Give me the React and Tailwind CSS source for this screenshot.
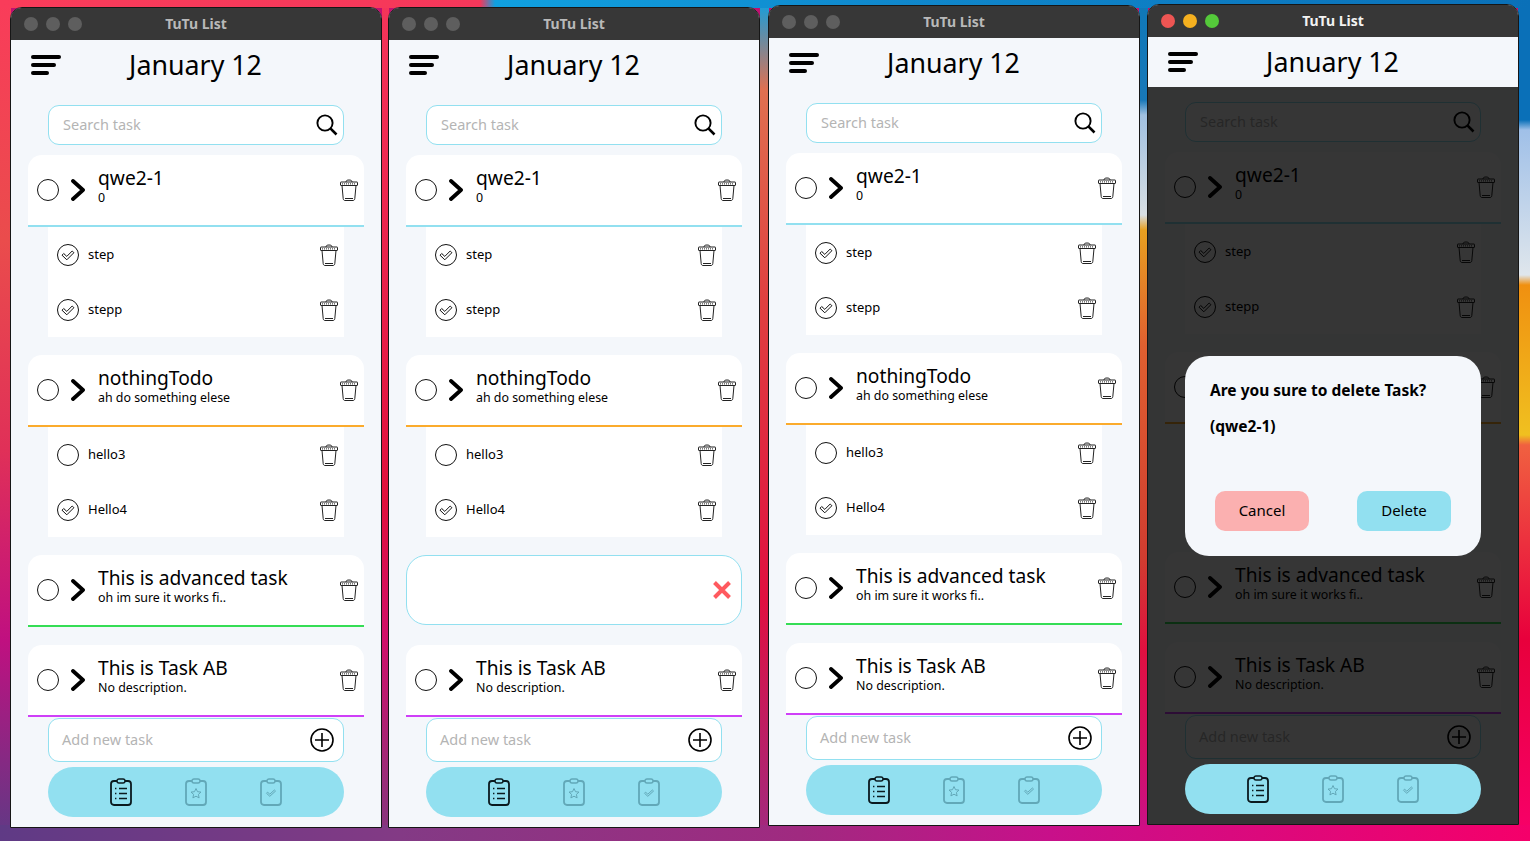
import React from "react";

const TASKS = [
  { title: "qwe2-1", sub: "0", line: "bg-[#92e0f0]", steps: [["step", true], ["stepp", true]] },
  { title: "nothingTodo", sub: "ah do something elese", line: "bg-[#fbab2c]", steps: [["hello3", false], ["Hello4", true]] },
  { title: "This is advanced task", sub: "oh im sure it works fi..", line: "bg-[#35dd55]", steps: [] },
  { title: "This is Task AB", sub: "No description.", line: "bg-[#cf3ff8]", steps: [] },
];

const Hamburger = () => (
  <svg width="30" height="22" viewBox="0 0 30 22" fill="none" stroke="#000" strokeWidth="4" strokeLinecap="round">
    <path d="M2 3H28" />
    <path d="M2 11H23" />
    <path d="M2 19H16" />
  </svg>
);

const SearchIcon = () => (
  <svg width="22" height="22" viewBox="0 0 22 22" fill="none" stroke="#000">
    <circle cx="9" cy="9" r="7.6" strokeWidth="1.9" />
    <path d="M14.6 14.6L20.5 20.5" strokeWidth="2.6" />
  </svg>
);

const Chevron = () => (
  <svg width="14" height="22" viewBox="0 0 14 22" fill="none" stroke="#000" strokeWidth="3.8" strokeLinecap="round" strokeLinejoin="round">
    <path d="M2 2L12 11L2 20" />
  </svg>
);

const Trash = () => (
  <svg width="18" height="22" viewBox="0 0 18 22" fill="none" stroke="#222" strokeWidth="1">
    <path d="M6 3C6 1.5 7 1 9 1S12 1.5 12 3" />
    <rect x="0.5" y="3" width="17" height="3.5" rx="0.5" />
    <path d="M2 4.9H16" strokeDasharray="1 1" />
    <path d="M2 6.5L3.2 19.6C3.3 20.8 4 21.5 5 21.5H13C14 21.5 14.7 20.8 14.8 19.6L16 6.5" />
    <path d="M5 19.5H13" />
  </svg>
);

const EmptyCircle = () => (
  <svg width="22" height="22" viewBox="0 0 22 22" fill="none" stroke="#111" strokeWidth="1">
    <circle cx="11" cy="11" r="10.5" />
  </svg>
);

const CheckCircle = () => (
  <svg width="22" height="22" viewBox="0 0 22 22" fill="none" stroke="#111" strokeWidth="1">
    <circle cx="11" cy="11" r="10.5" />
    <path d="M5 11.2L6.7 9.5L9.8 12.4L15.2 7L16.9 8.7L9.8 15.8Z" strokeLinejoin="round" />
  </svg>
);

const PlusCircle = () => (
  <svg width="24" height="24" viewBox="0 0 24 24" fill="none" stroke="#000" strokeWidth="1.6">
    <circle cx="12" cy="12" r="11" />
    <path d="M12 5V19M5 12H19" />
  </svg>
);

const Clipboard = ({ color, kind }) => (
  <svg width="22" height="28" viewBox="0 0 22 28" fill="none" stroke={color} strokeWidth="1.8">
    <rect x="1" y="3" width="20" height="24" rx="3" />
    <rect x="7" y="1" width="8" height="4" rx="2" fill="#92e0f0" strokeWidth="1.4" />
    {kind === "list" && (
      <>
        <path d="M9 10.5H17M9 15.5H17M9 20.5H17" strokeWidth="1.6" />
        <path d="M5 10.5H6.4M5 15.5H6.4M5 20.5H6.4" strokeWidth="1.4" />
      </>
    )}
    {kind === "star" && (
      <path d="M11 10.5L12.5 13.7L16 14.1L13.4 16.4L14.1 19.9L11 18.2L7.9 19.9L8.6 16.4L6 14.1L9.5 13.7Z" strokeWidth="1" strokeLinejoin="round" />
    )}
    {kind === "check" && (
      <path d="M6.5 15.3L7.6 14.2L9.8 16.2L14.4 12L15.5 13.1L9.8 18.3Z" strokeWidth="1" strokeLinejoin="round" />
    )}
  </svg>
);

const CloseX = () => (
  <svg width="18" height="18" viewBox="0 0 18 18" fill="none" stroke="#ff5a5f" strokeWidth="4">
    <path d="M1.5 1.5L16.5 16.5M16.5 1.5L1.5 16.5" />
  </svg>
);

function TitleBar({ active }) {
  return (
    <div className="relative flex h-[32px] shrink-0 items-center gap-[8px] rounded-t-[10px] bg-[#373737] pl-[13px]">
      <span className={`h-[14px] w-[14px] rounded-full ${active ? "bg-[#ed5553]" : "bg-[#5e5e5e]"}`} />
      <span className={`h-[14px] w-[14px] rounded-full ${active ? "bg-[#f5b01f]" : "bg-[#5e5e5e]"}`} />
      <span className={`h-[14px] w-[14px] rounded-full ${active ? "bg-[#54c93a]" : "bg-[#5e5e5e]"}`} />
      <span className={`absolute inset-x-0 -mt-[1px] text-center text-[14px] font-bold ${active ? "text-[#f2f2f2]" : "text-[#b9b9b9]"}`}>TuTu List</span>
    </div>
  );
}

function TaskCard({ task }) {
  return (
    <div>
      <div className="flex h-[70px] items-center rounded-t-[14px] bg-white pl-[9px] pr-[6px]">
        <EmptyCircle />
        <span className="ml-[12px] flex"><Chevron /></span>
        <div className="ml-[13px] flex-1 pb-[9px]">
          <div className="text-[19.2px] leading-[22px] text-black">{task.title}</div>
          <div className="mt-[1px] text-[12.4px] leading-[15px] text-black">{task.sub}</div>
        </div>
        <Trash />
      </div>
      <div className={`h-[2px] ${task.line}`} />
      {task.steps.length > 0 && (
        <div className="mx-[20px] bg-white">
          {task.steps.map(([label, done]) => (
            <div key={label} className="flex h-[55px] items-center pl-[9px] pr-[6px]">
              {done ? <CheckCircle /> : <EmptyCircle />}
              <span className="ml-[9px] flex-1 text-[13px] text-black">{label}</span>
              <Trash />
            </div>
          ))}
        </div>
      )}
    </div>
  );
}

function OpenInput() {
  return (
    <div className="mb-[2px] flex h-[70px] items-center justify-end rounded-[20px] border border-[#92e0f0] bg-white pr-[10px]">
      <CloseX />
    </div>
  );
}

function Window({ className, editing, dialog }) {
  return (
    <div className={`relative flex h-[821px] w-[372px] shrink-0 flex-col rounded-t-[12px] border border-[#161616] bg-[#f4f7fb] ${className}`}>
      <TitleBar active={dialog} />
      <div className="relative z-20 grid h-[50px] shrink-0 grid-cols-[1fr_auto_1fr] items-center bg-[#f4f7fb] pl-[20px] pr-[21px]">
        <Hamburger />
        <div className="text-[26.8px] text-black">January 12</div>
        <div />
      </div>
      <div className="mx-[37px] mt-[15px] flex h-[40px] items-center justify-between rounded-[11px] border border-[#92e0f0] bg-white pl-[14px] pr-[5px]">
        <span className="text-[14.5px] text-[#b4b4b4]">Search task</span>
        <SearchIcon />
      </div>
      <div className="mx-[17px] mt-[10px] flex flex-col gap-[18px]">
        <TaskCard task={TASKS[0]} />
        <TaskCard task={TASKS[1]} />
        {editing ? <OpenInput /> : <TaskCard task={TASKS[2]} />}
        <TaskCard task={TASKS[3]} />
      </div>
      <div className="mx-[37px] mt-[1px] flex h-[44px] items-center justify-between rounded-[11px] border border-[#92e0f0] bg-white pl-[13px] pr-[9px]">
        <span className="text-[14.5px] text-[#b4b4b4]">Add new task</span>
        <PlusCircle />
      </div>
      <div className="relative z-20 mx-[37px] mt-[5px] flex h-[50px] items-center justify-center gap-[53px] rounded-full bg-[#92e0f0]">
        <Clipboard color="#0b1a1f" kind="list" />
        <Clipboard color="#62a8b8" kind="star" />
        <Clipboard color="#62a8b8" kind="check" />
      </div>
      {dialog && (
        <>
          <div className="absolute inset-x-0 bottom-0 top-[82px] z-10 bg-black/[.79]" />
          <div className="absolute left-[37px] top-[351px] z-30 flex h-[200px] w-[296px] flex-col rounded-[24px] bg-[#f4f7fb] px-[25px]">
            <div className="mt-[24px] text-[15.5px] font-bold leading-[20px] text-black">Are you sure to delete Task?</div>
            <div className="mt-[16px] text-[15.5px] font-bold leading-[20px] text-black">(qwe2-1)</div>
            <div className="mt-[55px] flex justify-between px-[5px]">
              <button className="h-[40px] w-[94px] rounded-[10px] bg-[#fbb0b0] pb-[1px] text-[15px] text-black">Cancel</button>
              <button className="h-[40px] w-[94px] rounded-[10px] bg-[#92e0f0] pb-[1px] text-[15px] text-black">Delete</button>
            </div>
          </div>
        </>
      )}
    </div>
  );
}

export default function App() {
  return (
    <div className="flex h-[841px] w-[1530px] items-start overflow-hidden bg-[#c01070] bg-no-repeat pl-[10px] font-['Noto_Sans','Liberation_Sans',sans-serif] [background-image:linear-gradient(90deg,#f93c5a_0,#f5375a_480px,#10a0e0_495px,#1088cc_900px,#0a70b8_1530px),linear-gradient(90deg,#5f3a85_0,#833a85_400px,#a02a80_800px,#c8108a_1050px,#f5006a_1530px),linear-gradient(180deg,#f93c5a_0,#ea4c4c_240px,#e03058_450px,#c01080_640px,#5f3a85_841px),linear-gradient(180deg,#f5355a_0,#e8204a_300px,#e0103c_500px,#d0106a_640px,#83387f_841px),linear-gradient(180deg,#10a0e0_0,#e07050_90px,#e04040_300px,#e01040_600px,#a02a80_841px),linear-gradient(180deg,#1078b8_0,#1878b8_100px,#a0c0e0_115px,#d8dfe4_215px,#e8a020_230px,#e06030_345px,#d03c30_560px,#e01040_650px,#c8108a_841px),linear-gradient(180deg,#0a70b8_0,#0a70b8_120px,#a0c0e8_130px,#dfe6ec_275px,#f09010_285px,#f0c020_435px,#f06040_445px,#e8003c_640px,#f8006a_841px)] [background-position:0_0,0_bottom,0_0,382px_0,760px_0,1139px_0,1518px_0] [background-size:100%_8px,100%_16px,11px_100%,7px_100%,9px_100%,9px_100%,12px_100%]">
      <Window className="mt-[7px]" />
      <Window className="ml-[6px] mt-[7px]" editing />
      <Window className="ml-[8px] mt-[5px]" />
      <Window className="ml-[7px] mt-[4px]" dialog />
    </div>
  );
}
